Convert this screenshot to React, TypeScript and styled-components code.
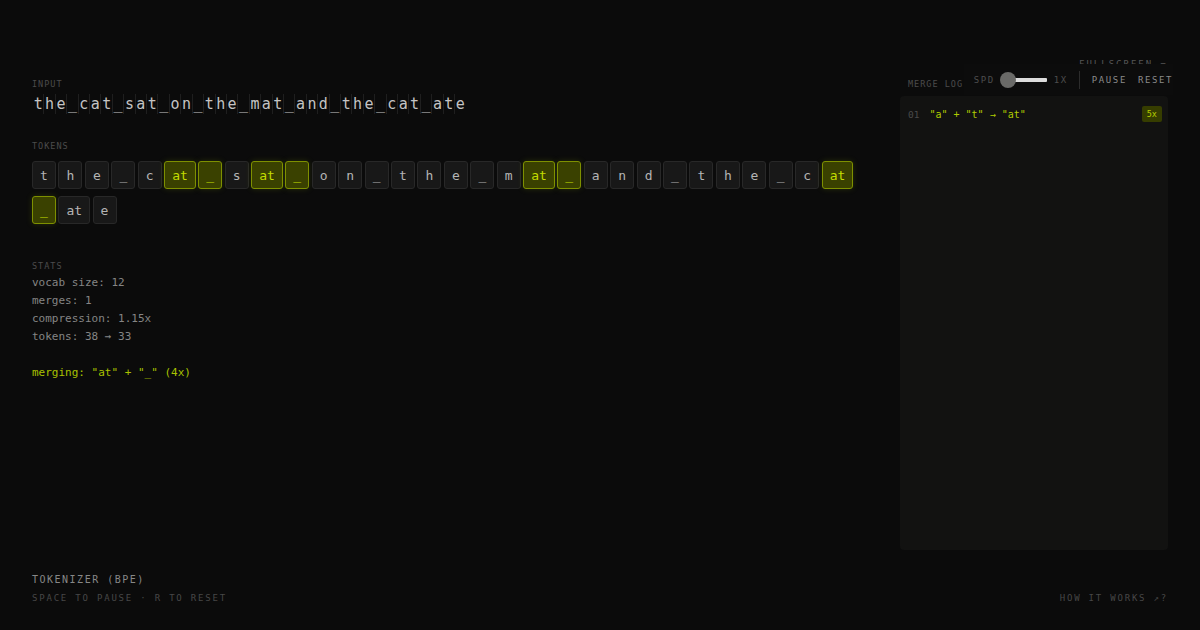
import React from 'react';
import styled, { createGlobalStyle, css } from 'styled-components';

const GlobalStyle = createGlobalStyle`
  html, body {
    margin: 0;
    padding: 0;
    background: #0b0b0b;
  }
  * {
    box-sizing: border-box;
  }
`;

const mono = `"DejaVu Sans Mono", "Liberation Mono", monospace`;

const Page = styled.div`
  position: relative;
  width: 1200px;
  height: 630px;
  overflow: hidden;
  background: #0b0b0b;
  font-family: ${mono};
  display: flex;
  flex-direction: column;
  padding: 0 32px;
`;

const TopBar = styled.div`
  height: 70px;
  display: flex;
  justify-content: flex-end;
  align-items: flex-start;
  padding-top: 58px;
`;

const Fullscreen = styled.span`
  font-size: 9px;
  line-height: 12px;
  letter-spacing: 2px;
  color: #555;
`;

const Controls = styled.div`
  position: absolute;
  top: 64px;
  right: 27px;
  height: 31px;
  padding: 0 0 0 10px;
  background: #0c0c0c;
  display: flex;
  align-items: center;
`;

const ControlText = styled.span<{ $bright?: boolean; $ml?: number }>`
  font-size: 9px;
  letter-spacing: 1.6px;
  color: ${p => (p.$bright ? '#8a8a8a' : '#4e4e4e')};
  margin-left: ${p => p.$ml ?? 0}px;
`;

const Slider = styled.div`
  position: relative;
  width: 47px;
  height: 16px;
  margin-left: 5px;
  display: flex;
  align-items: center;
`;

const Track = styled.div`
  position: absolute;
  left: 8px;
  right: 0;
  height: 4px;
  background: #dcdcdc;
  border-radius: 1px;
`;

const Thumb = styled.div`
  position: absolute;
  left: 0;
  width: 16px;
  height: 16px;
  border-radius: 50%;
  background: #6a6a68;
`;

const Divider = styled.div`
  width: 1px;
  height: 18px;
  background: #2c2c2c;
  margin: 0 0 0 11px;
`;

const Main = styled.div`
  flex: 1;
  display: grid;
  grid-template-columns: 1fr 268px;
  gap: 20px;
  padding-top: 8px;
`;

const Left = styled.div`
  display: flex;
  flex-direction: column;
`;

const Label = styled.div<{ $mt?: number; $pl?: number }>`
  font-size: 8.5px;
  line-height: 12px;
  letter-spacing: 1px;
  color: #4c4c4c;
  margin-top: ${p => p.$mt ?? 0}px;
  padding-left: ${p => p.$pl ?? 0}px;
`;

const InputLine = styled.div`
  display: flex;
  margin-top: 4px;
  height: 20px;
`;

const InputChar = styled.span`
  width: 11.42px;
  font-size: 15px;
  line-height: 20px;
  text-align: center;
  color: #c4c4c4;
  border-left: 1px solid #1f1f1f;
  &:first-child {
    border-left-color: transparent;
  }
`;

const TokenWrap = styled.div`
  width: 836px;
  margin-top: 9px;
  display: flex;
  flex-wrap: wrap;
  column-gap: 2.45px;
  row-gap: 7px;
`;

const Token = styled.span<{ $hot?: boolean }>`
  height: 28px;
  min-width: 24px;
  padding: 0 7px;
  display: inline-flex;
  align-items: center;
  justify-content: center;
  font-size: 13px;
  border-radius: 3px;
  background: #181818;
  border: 1px solid #282828;
  color: #b4b4b4;
  ${p =>
    p.$hot &&
    css`
      background: #3a4100;
      border-color: #7e9000;
      color: #c2dc00;
      box-shadow: 0 0 6px rgba(160, 190, 0, 0.18);
    `}
`;

const Stats = styled.div`
  margin-top: 2px;
  display: flex;
  flex-direction: column;
`;

const StatLine = styled.div<{ $accent?: boolean; $mt?: number }>`
  font-size: 11px;
  line-height: 18px;
  color: ${p => (p.$accent ? '#a9c200' : '#858585')};
  margin-top: ${p => p.$mt ?? 0}px;
`;

const Right = styled.div`
  display: flex;
  flex-direction: column;
`;

const LogPanel = styled.div`
  margin-top: 6px;
  height: 454px;
  background: #121211;
  border-radius: 4px;
  padding: 10px 6px 0 8px;
`;

const LogRow = styled.div`
  display: flex;
  align-items: center;
  height: 16px;
  gap: 10px;
`;

const LogIndex = styled.span`
  font-size: 9.5px;
  color: #4a4a4a;
`;

const LogText = styled.span`
  flex: 1;
  font-size: 10px;
  color: #b0cc00;
  white-space: pre;
`;

const Badge = styled.span`
  height: 16px;
  padding: 0 5px;
  display: inline-flex;
  align-items: center;
  font-size: 8.5px;
  background: #363d00;
  color: #b6cf00;
  border-radius: 2px;
`;

const Footer = styled.div`
  display: flex;
  justify-content: space-between;
  align-items: flex-end;
  padding-bottom: 26px;
`;

const FooterLeft = styled.div`
  display: flex;
  flex-direction: column;
  gap: 6px;
`;

const Title = styled.div`
  font-size: 10px;
  line-height: 12px;
  letter-spacing: 1.5px;
  color: #878787;
`;

const Hint = styled.div`
  font-size: 9px;
  line-height: 12px;
  letter-spacing: 1.8px;
  color: #474747;
`;

const input = 'the_cat_sat_on_the_mat_and_the_cat_ate';

const tokens = [
  't', 'h', 'e', '_', 'c', 'at', '_', 's', 'at', '_', 'o', 'n', '_', 't', 'h', 'e', '_',
  'm', 'at', '_', 'a', 'n', 'd', '_', 't', 'h', 'e', '_', 'c', 'at', '_', 'at', 'e',
];
const hot = new Set([5, 6, 8, 9, 18, 19, 29, 30]);

export default function App() {
  return (
    <>
      <GlobalStyle />
      <Page>
        <TopBar>
          <Fullscreen>FULLSCREEN ⌐</Fullscreen>
        </TopBar>

        <Controls>
          <ControlText>SPD</ControlText>
          <Slider>
            <Track />
            <Thumb />
          </Slider>
          <ControlText $ml={7}>1X</ControlText>
          <Divider />
          <ControlText $bright $ml={12}>PAUSE</ControlText>
          <ControlText $bright $ml={11}>RESET</ControlText>
        </Controls>

        <Main>
          <Left>
            <Label>INPUT</Label>
            <InputLine>
              {input.split('').map((c, i) => (
                <InputChar key={i}>{c}</InputChar>
              ))}
            </InputLine>

            <Label $mt={26}>TOKENS</Label>
            <TokenWrap>
              {tokens.map((t, i) => (
                <Token key={i} $hot={hot.has(i)}>
                  {t}
                </Token>
              ))}
            </TokenWrap>

            <Label $mt={36}>STATS</Label>
            <Stats>
              <StatLine>vocab size: 12</StatLine>
              <StatLine>merges: 1</StatLine>
              <StatLine>compression: 1.15x</StatLine>
              <StatLine>tokens: 38 → 33</StatLine>
              <StatLine $accent $mt={18}>
                merging: "at" + "_" (4x)
              </StatLine>
            </Stats>
          </Left>

          <Right>
            <Label $pl={8}>MERGE LOG</Label>
            <LogPanel>
              <LogRow>
                <LogIndex>01</LogIndex>
                <LogText>"a" + "t" → "at"</LogText>
                <Badge>5x</Badge>
              </LogRow>
            </LogPanel>
          </Right>
        </Main>

        <Footer>
          <FooterLeft>
            <Title>TOKENIZER (BPE)</Title>
            <Hint>SPACE TO PAUSE · R TO RESET</Hint>
          </FooterLeft>
          <Hint>HOW IT WORKS ↗?</Hint>
        </Footer>
      </Page>
    </>
  );
}
